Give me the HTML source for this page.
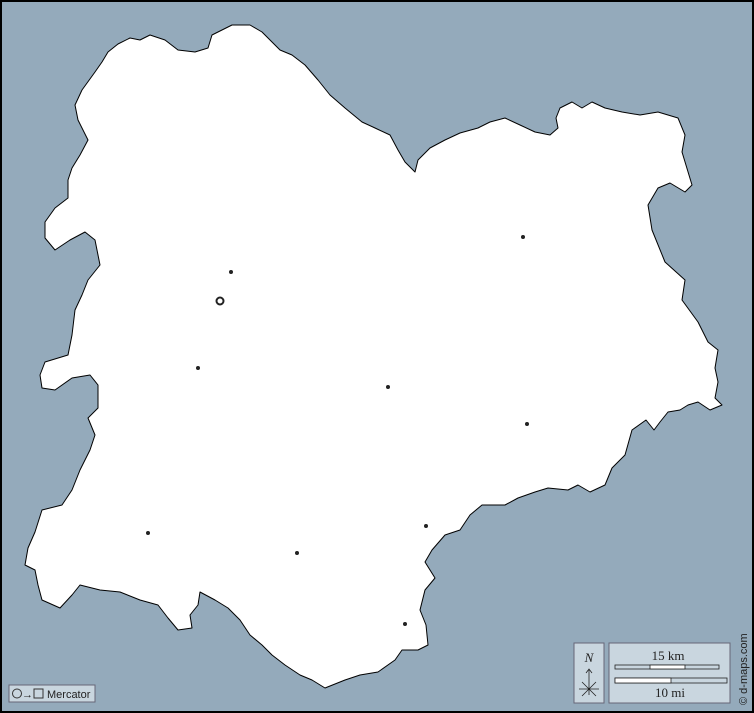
<!DOCTYPE html>
<html><head><style>
html,body{margin:0;padding:0;background:#94aabb;}
svg{display:block}
</style></head><body>
<svg width="754" height="713" viewBox="0 0 754 713" xmlns="http://www.w3.org/2000/svg">
<rect x="1" y="1" width="752" height="711" fill="#94aabb" stroke="#000" stroke-width="2"/>
<polygon fill="#fff" stroke="#000" stroke-width="1" stroke-linejoin="round" points="108,52 118,44 130,38 140,40 150,35 165,40 178,50 195,52 208,48 212,35 232,25 250,25 262,32 272,42 280,50 292,55 305,65 318,80 330,95 345,108 362,122 375,128 390,135 398,150 405,162 415,172 418,160 430,148 445,140 460,133 478,128 490,122 505,118 520,125 535,132 550,135 558,128 556,118 560,108 572,102 582,108 592,102 605,108 622,112 640,115 658,112 678,118 685,135 682,152 692,185 685,192 670,183 658,188 648,205 652,230 665,262 685,280 682,300 698,322 708,342 718,350 715,368 718,382 715,398 722,405 710,410 698,402 688,405 680,410 668,412 660,422 654,430 646,420 632,430 625,455 612,468 605,485 590,492 578,485 568,490 548,488 535,492 518,498 505,505 482,505 470,515 460,530 445,535 432,550 425,562 435,578 425,590 420,610 426,625 428,645 418,650 402,650 395,660 378,672 360,675 345,680 325,688 312,680 300,675 285,665 272,655 262,645 250,635 240,620 228,608 215,600 200,592 198,605 190,615 192,628 178,630 168,618 158,605 140,600 120,592 100,590 80,585 72,595 60,608 42,600 38,585 35,570 25,565 28,548 35,532 42,510 62,505 72,490 80,470 90,450 95,435 88,418 98,408 98,385 90,375 72,378 55,390 42,388 40,375 45,362 68,355 72,335 75,310 82,295 88,280 100,265 95,240 85,232 70,240 55,250 45,238 45,222 55,208 68,198 68,180 72,168 80,155 88,140 78,120 75,105 82,90 95,72 102,62"/>
<g fill="#222">
<circle cx="231" cy="272" r="2"/><circle cx="523" cy="237" r="2"/><circle cx="198" cy="368" r="2"/>
<circle cx="388" cy="387" r="2"/><circle cx="527" cy="424" r="2"/><circle cx="426" cy="526" r="2"/>
<circle cx="148" cy="533" r="2"/><circle cx="297" cy="553" r="2"/><circle cx="405" cy="624" r="2"/>
</g>
<circle cx="220" cy="301" r="3.5" fill="#fff" stroke="#222" stroke-width="2"/>
<rect x="9" y="685" width="86" height="17" fill="#c9d6df" stroke="#667" stroke-width="1"/>
<circle cx="17" cy="693.5" r="4.5" fill="none" stroke="#333"/>
<text x="22" y="698" font-family="Liberation Sans,sans-serif" font-size="11" fill="#222">→</text>
<rect x="34" y="689" width="9" height="9" fill="none" stroke="#333"/>
<text x="47" y="698" font-family="Liberation Sans,sans-serif" font-size="11" fill="#222">Mercator</text>
<rect x="574" y="643" width="30" height="60" fill="#c9d6df" stroke="#667"/>
<text x="589" y="662" text-anchor="middle" font-family="Liberation Serif,serif" font-style="italic" font-size="13" fill="#222">N</text>
<path d="M589 670V695M579 689H599M582 682L596 696M596 682L582 696M586 673L589 669L592 673" stroke="#222" stroke-width="0.8" fill="none"/>
<rect x="609" y="643" width="121" height="60" fill="#c9d6df" stroke="#667"/>
<text x="668" y="660" text-anchor="middle" font-family="Liberation Serif,serif" font-size="13" fill="#222">15 km</text>
<rect x="615" y="665" width="104" height="4" fill="#c9d6df" stroke="#222" stroke-width="0.8"/>
<rect x="650" y="665" width="35" height="4" fill="#fff" stroke="#222" stroke-width="0.8"/>
<rect x="615" y="678" width="112" height="5" fill="#c9d6df" stroke="#222" stroke-width="0.8"/>
<rect x="615" y="678" width="56" height="5" fill="#fff" stroke="#222" stroke-width="0.8"/>
<text x="670" y="697" text-anchor="middle" font-family="Liberation Serif,serif" font-size="13" fill="#222">10 mi</text>
<text transform="translate(747,705) rotate(-90)" font-family="Liberation Sans,sans-serif" font-size="11" fill="#222">© d-maps.com</text>
</svg>
</body></html>
